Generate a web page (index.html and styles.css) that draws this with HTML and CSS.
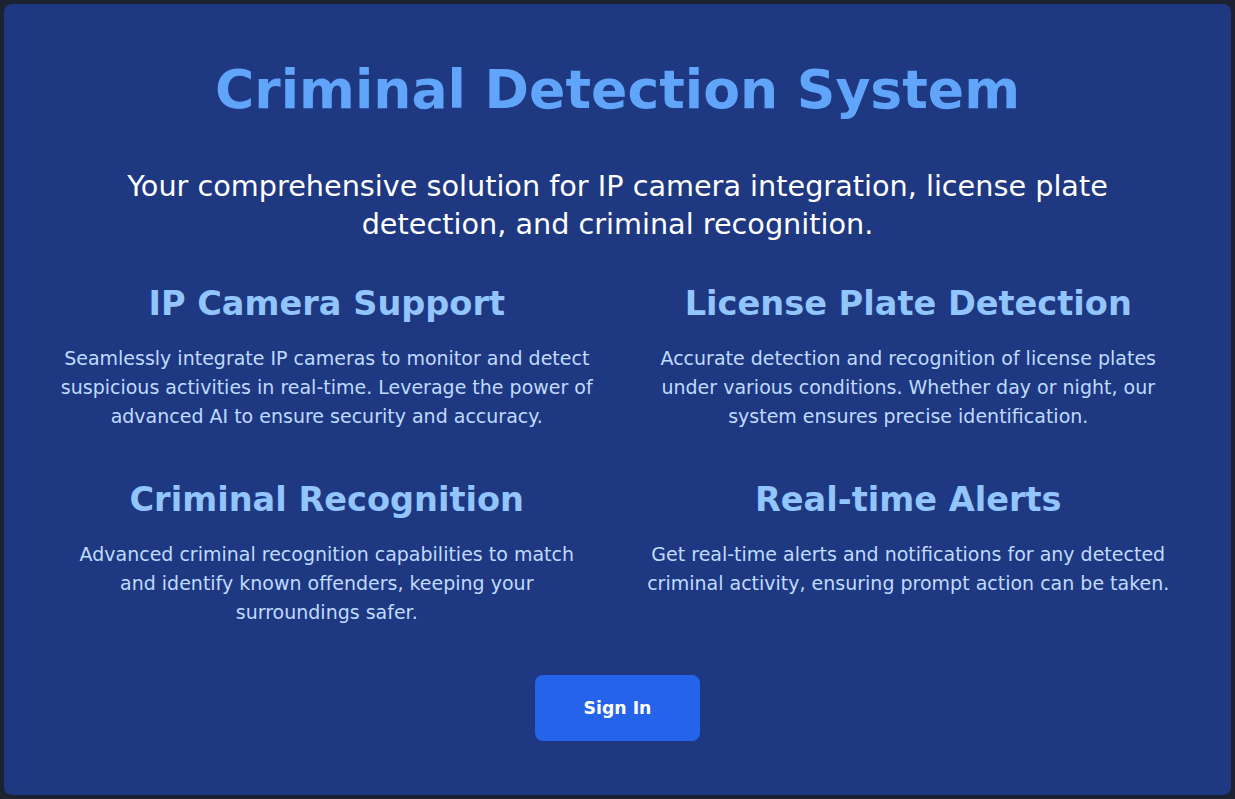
FILE: index.html
```html
<!DOCTYPE html>
<html lang="en">
<head>
<meta charset="utf-8">
<title>Criminal Detection System</title>
<link rel="stylesheet" href="styles.css">
</head>
<body>
  <main class="card">
    <h1 class="title">Criminal Detection System</h1>
    <p class="subtitle">Your comprehensive solution for IP camera integration, license plate detection, and criminal recognition.</p>
    <section class="features">
      <div class="feature">
        <h2 class="feature-title">IP Camera Support</h2>
        <p class="feature-text">Seamlessly integrate IP cameras to monitor and detect suspicious activities in real-time. Leverage the power of advanced AI to ensure security and accuracy.</p>
      </div>
      <div class="feature">
        <h2 class="feature-title">License Plate Detection</h2>
        <p class="feature-text">Accurate detection and recognition of license plates under various conditions. Whether day or night, our system ensures precise identification.</p>
      </div>
      <div class="feature">
        <h2 class="feature-title">Criminal Recognition</h2>
        <p class="feature-text">Advanced criminal recognition capabilities to match and identify known offenders, keeping your surroundings safer.</p>
      </div>
      <div class="feature">
        <h2 class="feature-title">Real-time Alerts</h2>
        <p class="feature-text">Get real-time alerts and notifications for any detected criminal activity, ensuring prompt action can be taken.</p>
      </div>
    </section>
    <div class="actions">
      <a class="btn" href="#">Sign In</a>
    </div>
  </main>
</body>
</html>
```

FILE: styles.css
```css
* { box-sizing: border-box; }

html, body {
  margin: 0;
  height: 100%;
}

body {
  background: #1c2230;
  padding: 4px;
  font-family: "DejaVu Sans", "Liberation Sans", sans-serif;
}

.card {
  height: 100%;
  background: #1f3882;
  border-radius: 8px;
  padding: 59px 48px 48px;
  text-align: center;
}

.title {
  margin: 0;
  font-size: 53.6px;
  line-height: 1;
  font-weight: 700;
  color: #60a5fa;
}

.subtitle {
  margin: 50px 0 0;
  font-size: 28.7px;
  line-height: 38px;
  color: #ffffff;
  padding: 0 50px;
}

.features {
  margin-top: 41px;
  display: grid;
  grid-template-columns: 1fr 1fr;
  column-gap: 32px;
  row-gap: 48.5px;
}

.feature {
  padding: 0 7px;
}

.feature-title {
  margin: 0 0 20.5px;
  font-size: 33.6px;
  line-height: 40px;
  font-weight: 700;
  color: #93c5fd;
}

.feature-text {
  margin: 0;
  font-size: 19px;
  line-height: 29px;
  color: #bfdbfe;
}

.actions {
  margin-top: 48px;
  display: flex;
  justify-content: center;
}

.btn {
  display: block;
  width: 165px;
  height: 66px;
  line-height: 66px;
  border-radius: 8px;
  background: #2563eb;
  color: #ffffff;
  font-weight: 700;
  font-size: 17.3px;
  text-decoration: none;
}
```
